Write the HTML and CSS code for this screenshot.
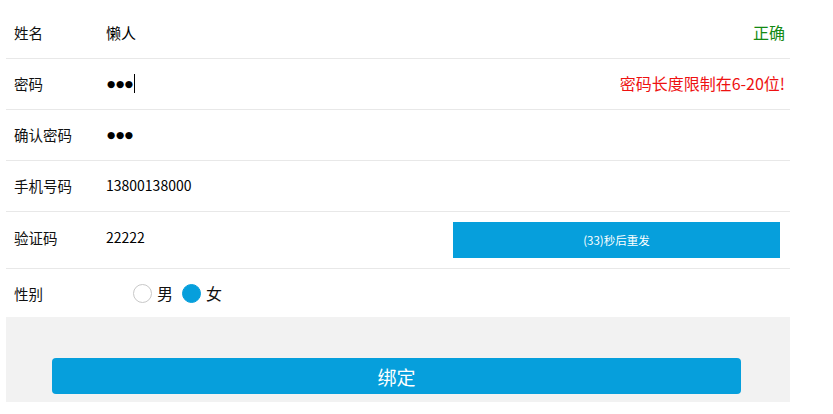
FILE: index.html
```html
<!DOCTYPE html>
<html lang="zh-CN">
<head>
<meta charset="utf-8">
<title>绑定</title>
<link rel="stylesheet" href="styles.css">
</head>
<body>
<div class="form">
  <div class="row">
    <span class="label">姓名</span>
    <span class="value">懒人</span>
    <span class="msg ok">正确</span>
  </div>
  <div class="row">
    <span class="label">密码</span>
    <span class="value"><span class="dots">●●●</span><span class="caret"></span></span>
    <span class="msg err">密码长度限制在6-20位!</span>
  </div>
  <div class="row">
    <span class="label">确认密码</span>
    <span class="value"><span class="dots">●●●</span></span>
  </div>
  <div class="row">
    <span class="label">手机号码</span>
    <span class="value num">13800138000</span>
  </div>
  <div class="row code">
    <span class="label">验证码</span>
    <span class="value num">22222</span>
    <button class="send">(33)秒后重发</button>
  </div>
  <div class="row gender">
    <span class="label">性别</span>
    <span class="radios">
      <span class="radio"></span><span class="opt">男</span>
      <span class="radio checked"></span><span class="opt">女</span>
    </span>
  </div>
  <div class="footer">
    <button class="submit">绑定</button>
  </div>
</div>
</body>
</html>
```

FILE: styles.css
```css
html, body {
  margin: 0;
  padding: 0;
  background: #fff;
}
body {
  font-family: "Noto Sans CJK SC", "Noto Sans", sans-serif;
  color: #111;
}
.form {
  width: 784px;
  margin: 8px 0 0 6px;
}
.row {
  display: flex;
  align-items: center;
  height: 48px;
  padding-bottom: 2px;
  border-bottom: 1px solid #e8e8e8;
}
.label {
  width: 92px;
  padding-left: 8px;
  font-size: 14.5px;
  color: #111;
  flex: none;
}
.value {
  flex: 1;
  font-size: 15px;
  color: #000;
  display: flex;
  align-items: center;
}
.value.num {
  font-size: 14px;
}
.dots {
  font-family: "DejaVu Sans", sans-serif;
  font-size: 9.5px;
  letter-spacing: 0.6px;
  line-height: 1;
  position: relative;
  top: 1px;
  left: 1px;
}
.caret {
  display: inline-block;
  width: 1px;
  height: 19px;
  background: #000;
  margin-left: 1px;
}
.msg {
  font-size: 16px;
  padding-right: 5px;
}
.msg.ok { color: #138a13; }
.msg.err { color: #ee1111; }
.row.code {
  height: 56px;
  padding-bottom: 0;
}
.row.code .label,
.row.code .value {
  margin-bottom: 6px;
}
.send {
  width: 327px;
  height: 36px;
  margin-right: 10px;
  border: none;
  background: #069fdc;
  color: #fff;
  font-family: inherit;
  font-size: 11.5px;
  padding: 0;
}
.row.gender {
  height: 48px;
  padding-bottom: 0;
  border-bottom: none;
}
.radios {
  display: flex;
  align-items: center;
  padding-left: 27px;
}
.radio {
  width: 17px;
  height: 17px;
  border: 1px solid #c8c8c8;
  border-radius: 50%;
  background: #fff;
  box-sizing: content-box;
}
.radio.checked {
  background: #069fdc;
  border-color: #069fdc;
}
.opt {
  font-size: 16px;
  margin: 0 9px 0 5px;
  color: #111;
}
.footer {
  background: #f2f2f2;
  height: 85px;
  padding-top: 41px;
  box-sizing: border-box;
}
.submit {
  display: block;
  margin-left: 46px;
  width: 689px;
  height: 36px;
  border: none;
  border-radius: 4px;
  background: #069fdc;
  color: #fff;
  font-family: inherit;
  font-size: 19px;
  padding: 0;
}
```
